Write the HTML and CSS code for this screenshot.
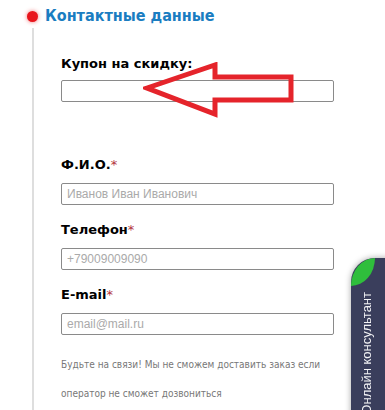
FILE: index.html
```html
<!DOCTYPE html>
<html lang="ru">
<head>
    <meta charset="UTF-8">
    <meta name="viewport" content="width=device-width, initial-scale=1.0">
    <title>Оформление заказа</title>
    <link rel="stylesheet" href="styles.css">
</head>
<body>
    <div class="step">
        <h2 class="step-title"><span class="step-dot"></span>Контактные данные</h2>
        <div class="step-body">
            <div class="field coupon">
                <label for="coupon">Купон на скидку:</label>
                <input type="text" id="coupon" class="text-input">
                <svg class="coupon-arrow" width="160" height="60" viewBox="0 0 160 60">
                    <polygon points="4,26 72,3 72,15 148,15 148,38 72,38 72,52" fill="none" stroke="#e5242b" stroke-width="5" stroke-linejoin="miter"/>
                </svg>
            </div>
            <div class="field">
                <label for="fio">Ф.И.О.<span class="req">*</span></label>
                <input type="text" id="fio" class="text-input" placeholder="Иванов Иван Иванович">
            </div>
            <div class="field">
                <label for="phone">Телефон<span class="req">*</span></label>
                <input type="text" id="phone" class="text-input" placeholder="+79009009090">
            </div>
            <div class="field">
                <label for="email">E-mail<span class="req">*</span></label>
                <input type="text" id="email" class="text-input" placeholder="email@mail.ru">
            </div>
            <p class="hint">Будьте на связи! Мы не сможем доставить заказ если оператор не сможет дозвониться</p>
        </div>
    </div>

    <div class="consult-tab">
        <span class="consult-leaf"></span>
        <span class="consult-text">Онлайн консультант</span>
    </div>
</body>
</html>
```

FILE: styles.css
```css
body {
    margin: 0;
    background: #fff;
    font-family: "DejaVu Sans", Verdana, sans-serif;
    color: #000;
    overflow: hidden;
}
.step {
    padding-top: 4px;
}
.step-title {
    display: flex;
    align-items: center;
    gap: 7px;
    margin: 0;
    padding-left: 27px;
    font-family: "DejaVu Sans Condensed", "DejaVu Sans", sans-serif;
    font-size: 16px;
    line-height: 24px;
    font-weight: bold;
    color: #1a7dc1;
}
.step-dot {
    width: 11px;
    height: 11px;
    border-radius: 50%;
    background: #e8141b;
    box-shadow: 0 0 4px rgba(232, 20, 27, 0.6);
}
.step-body {
    margin-left: 32px;
    padding: 26px 0 20px 27px;
    border-left: 2px solid #dedede;
}
.field {
    position: relative;
    margin-bottom: 15px;
}
.field.coupon {
    margin-bottom: 53px;
}
.field label {
    display: block;
    margin-bottom: 8px;
    font-size: 13px;
    line-height: 20px;
    font-weight: bold;
}
.field.coupon label {
    margin-bottom: 6px;
}
.req {
    color: #b3343c;
    font-weight: normal;
}
.text-input {
    display: block;
    box-sizing: border-box;
    width: 273px;
    height: 22px;
    margin: 0;
    padding: 0 5px;
    border: 1px solid #8a8a8a;
    border-radius: 2px;
    font-family: "Liberation Sans", Arial, sans-serif;
    font-size: 12px;
    color: #333;
}
.text-input::placeholder {
    color: #aaa;
}
.coupon-arrow {
    position: absolute;
    left: 82px;
    top: 8px;
}
.hint {
    margin: 12px 0 0;
    font-family: "DejaVu Sans Condensed", "DejaVu Sans", sans-serif;
    font-size: 10px;
    line-height: 29px;
    color: #777;
    width: 272px;
}
.consult-tab {
    position: fixed;
    left: 351px;
    top: 258px;
    width: 44px;
    height: 170px;
    border-top-left-radius: 24px;
    background: #3a3e5c;
    box-shadow: 0 0 6px rgba(0, 0, 0, 0.35);
    overflow: hidden;
}
.consult-leaf {
    position: absolute;
    left: 0;
    top: 0;
    width: 24px;
    height: 28px;
    background: #2fbe3c;
    border-radius: 100% 0 100% 0;
}
.consult-text {
    position: absolute;
    left: 8px;
    top: 34px;
    writing-mode: vertical-rl;
    transform: rotate(180deg);
    font-family: "Liberation Sans", Arial, sans-serif;
    font-size: 13px;
    line-height: 16px;
    color: #f2f2f5;
    white-space: nowrap;
}
```
